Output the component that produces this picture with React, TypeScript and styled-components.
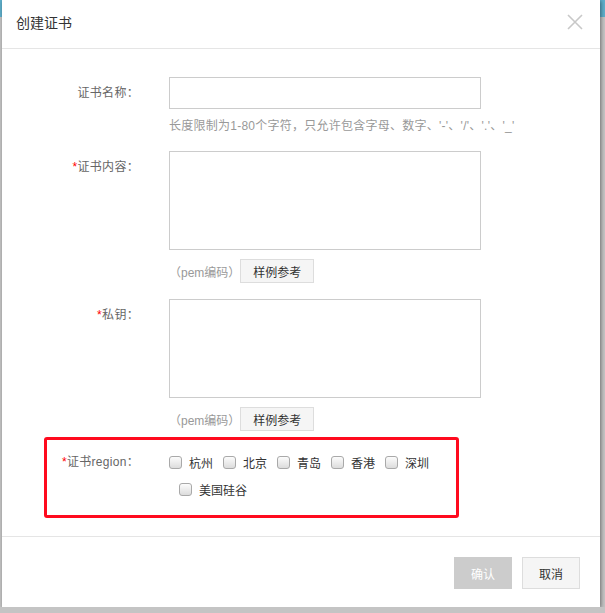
import styled, { createGlobalStyle } from "styled-components";

const GlobalStyle = createGlobalStyle`
  html, body {
    margin: 0;
    padding: 0;
  }
  html {
    background: #c4c4c4 linear-gradient(#5eafcb, #5eafcb) no-repeat;
    background-size: 100% 17px;
  }
  body {
    font-family: "Liberation Sans", "Noto Sans CJK SC", sans-serif;
    font-size: 12px;
    color: #333;
  }
`;

const Page = styled.div`
  padding-left: 2px;
  width: 598px;
`;

const Dialog = styled.div`
  position: relative;
  width: 598px;
  background: #fff;
  box-shadow: 1px 1px 4px rgba(0, 0, 0, 0.45);
`;

const Header = styled.div`
  height: 49px;
  display: flex;
  align-items: center;
  justify-content: space-between;
  padding: 0 16px 4px 14px;
  box-sizing: border-box;
  border-bottom: 1px solid #e5e5e5;
`;

const Title = styled.span`
  font-size: 14px;
  color: #333;
  font-family: "Noto Sans CJK SC", sans-serif;
`;

const Close = styled.button`
  width: 18px;
  height: 18px;
  padding: 0;
  border: 0;
  background: none;
  display: flex;
  align-items: center;
  justify-content: center;
`;

const Body = styled.div`
  padding: 28px 0 33px;
`;

const Row = styled.div<{ $gap?: number }>`
  display: grid;
  grid-template-columns: 137px 312px;
  column-gap: 30px;
  margin-bottom: ${(p) => p.$gap ?? 0}px;
`;

const Label = styled.label<{ $lh?: number }>`
  text-align: right;
  color: #666;
  line-height: ${(p) => p.$lh ?? 32}px;
  white-space: nowrap;
  letter-spacing: 0.3px;
`;

const Star = styled.span`
  color: #f00;
`;

const Field = styled.div`
  display: flex;
  flex-direction: column;
`;

const Input = styled.input`
  height: 32px;
  box-sizing: border-box;
  border: 1px solid #ccc;
  margin: 0;
  outline: none;
`;

const Textarea = styled.textarea`
  height: 99px;
  box-sizing: border-box;
  border: 1px solid #ccc;
  margin: 0;
  resize: none;
  outline: none;
`;

const Hint = styled.div`
  margin-top: 8px;
  line-height: 18px;
  color: #999;
  white-space: nowrap;
  letter-spacing: 0.25px;
`;

const PemRow = styled.div`
  margin-top: 9px;
  display: flex;
  align-items: center;
  color: #999;
`;

const GrayButton = styled.button<{ $w: number; $h: number }>`
  width: ${(p) => p.$w}px;
  height: ${(p) => p.$h}px;
  box-sizing: border-box;
  border: 1px solid #ddd;
  background: #f5f5f5;
  color: #333;
  font-family: inherit;
  font-size: 12px;
  padding: 0;
`;

const PrimaryButton = styled.button`
  width: 58px;
  height: 32px;
  border: 0;
  background: #ccc;
  color: #fff;
  font-family: inherit;
  font-size: 12px;
  padding: 0;
`;

const Regions = styled.div`
  display: flex;
  flex-wrap: wrap;
  width: 312px;
`;

const RegionItem = styled.label<{ $first?: boolean }>`
  display: flex;
  align-items: center;
  height: 27px;
  margin-left: ${(p) => (p.$first ? 0 : 10)}px;
  color: #333;
`;

const Box = styled.span`
  width: 13px;
  height: 13px;
  box-sizing: border-box;
  border: 1px solid #a9a9a9;
  border-radius: 3px;
  background: linear-gradient(#fcfcfc, #dcdcdc);
  margin-right: 7px;
`;

const Footer = styled.div`
  border-top: 1px solid #e5e5e5;
  display: flex;
  justify-content: flex-end;
  gap: 10px;
  padding: 20px 20px 18px;
`;

const Highlight = styled.div`
  position: absolute;
  left: 42px;
  top: 437px;
  width: 415px;
  height: 81px;
  box-sizing: border-box;
  border: 3px solid #ff0a1e;
  border-radius: 3px;
  pointer-events: none;
`;

const regions = ["杭州", "北京", "青岛", "香港", "深圳", "美国硅谷"];

const Pem = () => (
  <PemRow>
    <span>（pem编码）</span>
    <GrayButton $w={74} $h={24}>样例参考</GrayButton>
  </PemRow>
);

export default function App() {
  return (
    <>
      <GlobalStyle />
      <Page>
        <Dialog>
          <Header>
            <Title>创建证书</Title>
            <Close aria-label="close">
              <svg width="16" height="16" viewBox="0 0 16 16">
                <path d="M1 1L15 15M15 1L1 15" stroke="#c8c8c8" strokeWidth="1.6" />
              </svg>
            </Close>
          </Header>
          <Body>
            <Row $gap={16}>
              <Label>证书名称：</Label>
              <Field>
                <Input />
                <Hint>长度限制为1-80个字符，只允许包含字母、数字、'-'、'/'、'.'、'_'</Hint>
              </Field>
            </Row>
            <Row $gap={16}>
              <Label>
                <Star>*</Star>证书内容：
              </Label>
              <Field>
                <Textarea />
                <Pem />
              </Field>
            </Row>
            <Row $gap={18}>
              <Label>
                <Star>*</Star>私钥：
              </Label>
              <Field>
                <Textarea />
                <Pem />
              </Field>
            </Row>
            <Row>
              <Label $lh={27}>
                <Star>*</Star>证书region：
              </Label>
              <Regions>
                {regions.map((r, i) => (
                  <RegionItem key={r} $first={i === 0}>
                    <Box />
                    {r}
                  </RegionItem>
                ))}
              </Regions>
            </Row>
          </Body>
          <Footer>
            <PrimaryButton>确认</PrimaryButton>
            <GrayButton $w={58} $h={32}>取消</GrayButton>
          </Footer>
          <Highlight />
        </Dialog>
      </Page>
    </>
  );
}
